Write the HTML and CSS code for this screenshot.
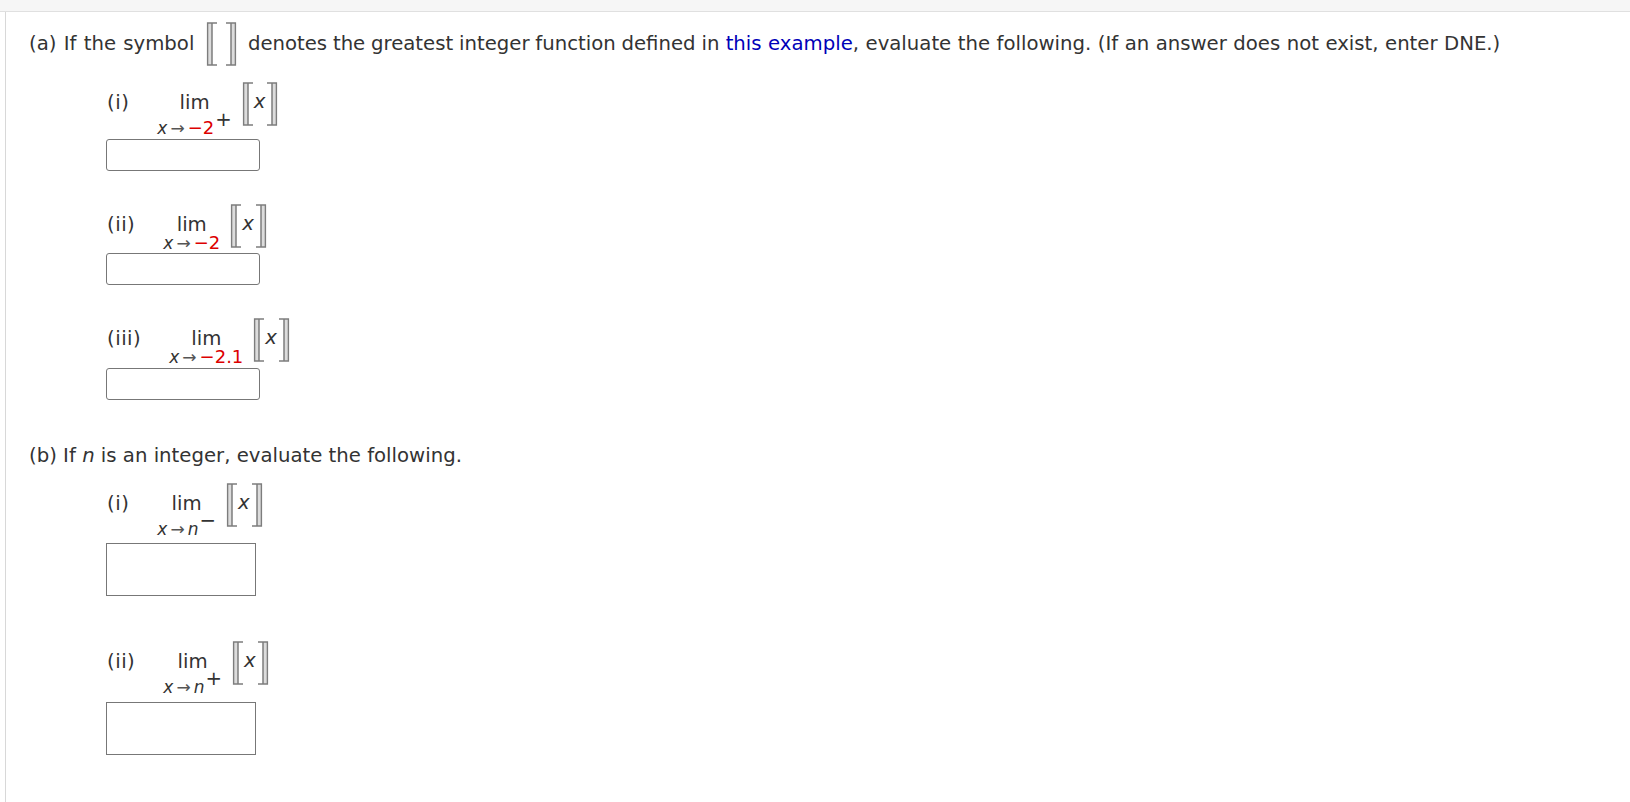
FILE: index.html
```html
<!DOCTYPE html>
<html lang="en">
<head>
<meta charset="utf-8">
<title>Greatest integer function</title>
<link rel="stylesheet" href="styles.css">
</head>
<body>
<svg class="defs" width="0" height="0" aria-hidden="true">
  <defs>
    <g id="lb" fill="none" stroke="#7d7d7d" stroke-width="1.4">
      <rect x="2" y="1" width="4" height="42" fill="#dcdcdc" stroke="none"/>
      <path d="M11 1H1.6V43H11"/><path d="M6 1V43" stroke-width="1.5"/>
    </g>
    <g id="rb" fill="none" stroke="#7d7d7d" stroke-width="1.4">
      <rect x="5" y="1" width="4" height="42" fill="#dcdcdc" stroke="none"/>
      <path d="M0 1H9.4V43H0"/><path d="M5 1V43" stroke-width="1.5"/>
    </g>
  </defs>
</svg>
<div class="topbar"></div>
<main class="content">
  <p class="question q-a"><span class="lead">(a) If the symbol</span> <span class="brackets wide"><svg width="11" height="44"><use href="#lb"/></svg><svg width="11" height="44"><use href="#rb"/></svg></span> <span class="mid">denotes the greatest integer function defined in</span> <span class="tail"><a class="link">this example</a>, evaluate the following. (If an answer does not exist, enter DNE.)</span></p>

  <div class="part p1">
    <div class="expr"><span class="label">(i)</span>
      <span class="limit"><span class="lim">lim</span><span class="sub raised"><i>x</i><span class="arrow">→</span><b>−2</b><span class="sup">+</span></span></span>
      <span class="brackets"><svg width="11" height="44"><use href="#lb"/></svg><i class="var">x</i><svg width="11" height="44"><use href="#rb"/></svg></span>
    </div>
    <div class="answer round"></div>
  </div>

  <div class="part p2">
    <div class="expr"><span class="label">(ii)</span>
      <span class="limit"><span class="lim">lim</span><span class="sub"><i>x</i><span class="arrow">→</span><b>−2</b></span></span>
      <span class="brackets"><svg width="11" height="44"><use href="#lb"/></svg><i class="var">x</i><svg width="11" height="44"><use href="#rb"/></svg></span>
    </div>
    <div class="answer round"></div>
  </div>

  <div class="part p3">
    <div class="expr"><span class="label">(iii)</span>
      <span class="limit"><span class="lim">lim</span><span class="sub"><i>x</i><span class="arrow">→</span><b>−2.1</b></span></span>
      <span class="brackets"><svg width="11" height="44"><use href="#lb"/></svg><i class="var">x</i><svg width="11" height="44"><use href="#rb"/></svg></span>
    </div>
    <div class="answer round"></div>
  </div>

  <p class="question q-b">(b) If <i>n</i> is an integer, evaluate the following.</p>

  <div class="part p4">
    <div class="expr"><span class="label">(i)</span>
      <span class="limit"><span class="lim">lim</span><span class="sub raised"><i>x</i><span class="arrow">→</span><i>n</i><span class="sup">−</span></span></span>
      <span class="brackets"><svg width="11" height="44"><use href="#lb"/></svg><i class="var">x</i><svg width="11" height="44"><use href="#rb"/></svg></span>
    </div>
    <div class="answer tall"></div>
  </div>

  <div class="part p5">
    <div class="expr"><span class="label">(ii)</span>
      <span class="limit"><span class="lim">lim</span><span class="sub raised"><i>x</i><span class="arrow">→</span><i>n</i><span class="sup">+</span></span></span>
      <span class="brackets"><svg width="11" height="44"><use href="#lb"/></svg><i class="var">x</i><svg width="11" height="44"><use href="#rb"/></svg></span>
    </div>
    <div class="answer tall"></div>
  </div>
</main>
</body>
</html>
```
FILE: styles.css
```css
* { box-sizing: border-box; }
html, body { margin: 0; padding: 0; height: 100%; overflow: hidden; }
body {
  background: #fff;
  color: #333;
  font-family: "DejaVu Sans", Verdana, sans-serif;
  font-size: 19.7px;
  display: flex;
  flex-direction: column;
}
.defs { position: absolute; }
.topbar {
  height: 12px;
  flex: none;
  background: #f6f6f6;
  border-bottom: 1px solid #e0e0e0;
}
.content {
  flex: 1;
  margin-left: 5px;
  border-left: 1px solid #d8d8d8;
  padding: 10px 0 0 23px;
}
.question { margin: 0; white-space: nowrap; }
.q-a { line-height: 44px; height: 44px; }
.lead { word-spacing: 1px; }
.mid { word-spacing: -0.45px; }
.tail { word-spacing: 0.23px; }
.q-b { margin-top: 44px; line-height: 24px; }
.link { color: #0000b8; }
.brackets { display: inline-flex; align-items: center; height: 44px; flex: none; }
.q-a .brackets { vertical-align: middle; margin: -1px 5px 0 5px; }
.brackets.wide { gap: 9px; }
.var { font-size: 19.7px; line-height: 1; margin: -4px 2px 0 1px; }
.part { margin-left: 78px; }
.expr { display: flex; align-items: flex-start; }
.label { line-height: 24px; margin-top: 10px; letter-spacing: 0.5px; }
.limit { display: flex; flex-direction: column; align-items: center; margin-left: 28px; padding-top: 10px; }
.lim { line-height: 24px; }
.sub { font-size: 17px; line-height: 18px; display: flex; align-items: baseline; margin-top: -3px; }
.sub.raised { margin-top: 4px; }
.sub b { color: #d00; font-size: 18px; line-height: 0; font-weight: normal; }
.arrow { font-size: 17px; line-height: 0; margin: 0 3px; color: #555; }
.sup { font-size: 19.7px; line-height: 0; position: relative; top: -8px; margin-left: 1px; }
.limit + .brackets { margin: 1px 0 0 10px; }
.answer { background: #fff; border: 1px solid #777; margin-left: -1px; }
.round { width: 154px; height: 32px; border-radius: 3px; margin-top: 1px; }
.p1 .round { margin-top: 2px; }
.p3 .round { margin-top: 2px; }
.tall { width: 150px; height: 53px; margin-top: 5px; }
.p5 .tall { margin-top: 6px; }
.p1 { margin-top: 15px; }
.p2 { margin-top: 32px; }
.p3 { margin-top: 32px; }
.p4 { margin-top: 14px; }
.p5 { margin-top: 44px; }
```
